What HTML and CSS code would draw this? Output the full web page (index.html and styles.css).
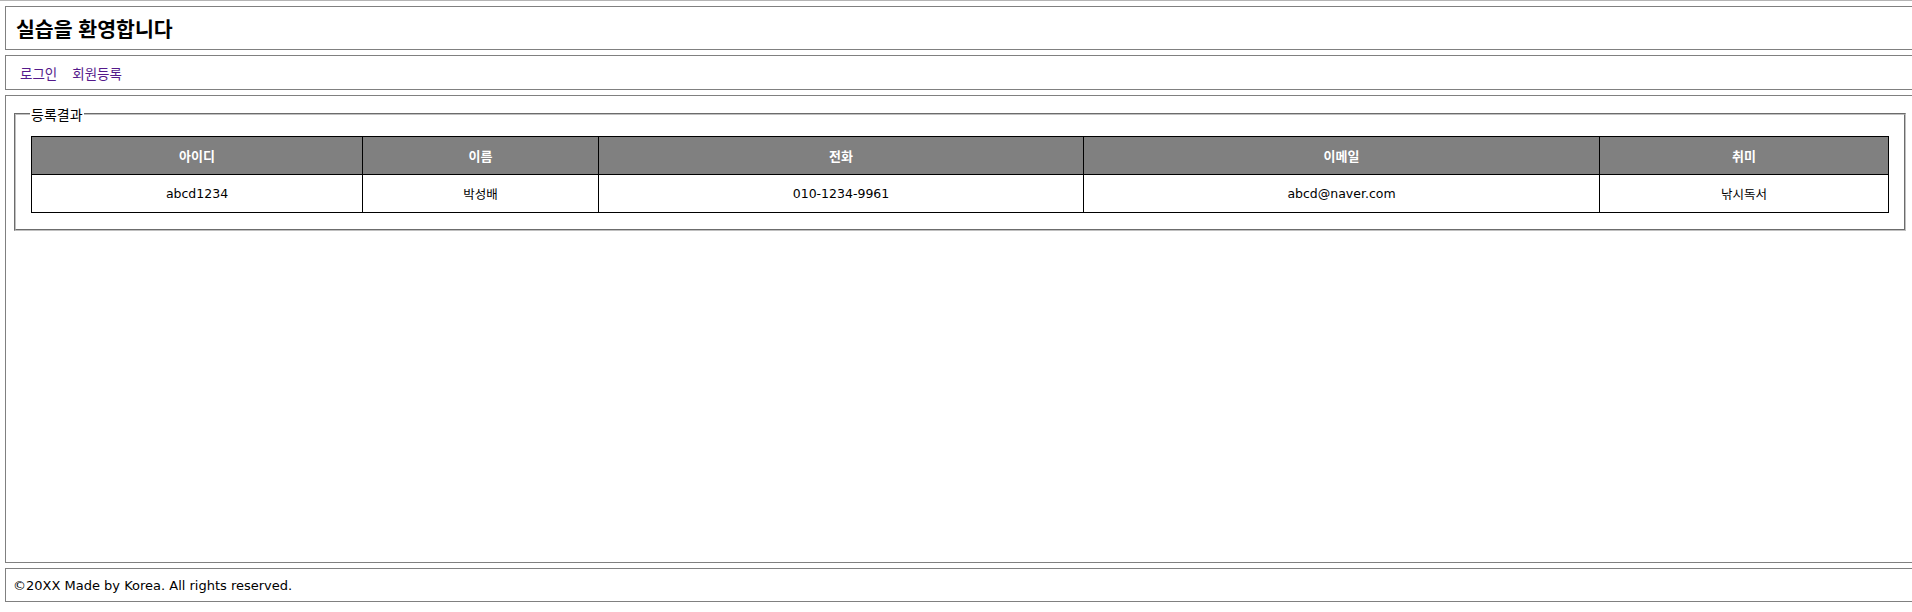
FILE: index.html
```html
<!DOCTYPE html>
<html lang="ko">
<head>
<meta charset="utf-8">
<title>실습</title>
<link rel="stylesheet" href="styles.css">
</head>
<body>
<header class="box header">
  <h3 class="title">실습을 환영합니다</h3>
</header>
<nav class="box nav">
  <a href="#login" class="link">로그인</a>
  <a href="#join" class="link">회원등록</a>
</nav>
<main class="box main">
  <fieldset class="result">
    <legend class="legend">등록결과</legend>
    <table class="grid">
      <colgroup>
        <col class="c1"><col class="c2"><col class="c3"><col class="c4"><col class="c5">
      </colgroup>
      <thead>
        <tr><th>아이디</th><th>이름</th><th>전화</th><th>이메일</th><th>취미</th></tr>
      </thead>
      <tbody>
        <tr><td>abcd1234</td><td>박성배</td><td>010-1234-9961</td><td>abcd@naver.com</td><td>낚시독서</td></tr>
      </tbody>
    </table>
  </fieldset>
</main>
<footer class="box footer">©20XX Made by Korea. All rights reserved.</footer>
</body>
</html>
```
FILE: styles.css
```css
html, body {
  margin: 0;
}
body {
  border-top: 1px solid #b4b4b4;
  padding: 5px 0 0 5px;
  font-family: "DejaVu Sans", Verdana, "Noto Sans CJK KR", sans-serif;
  font-size: 13px;
  color: #000;
  background: #fff;
}
.box {
  border: 1px solid #808080;
  width: 100%;
  margin-bottom: 5px;
}
.header {
  height: 42px;
  padding: 0 10px;
  display: flex;
  align-items: center;
}
.title {
  margin: 0;
  font-family: "Noto Sans CJK KR", sans-serif;
  font-size: 20.5px;
  font-weight: bold;
}
.nav {
  height: 33px;
  padding: 0 14px;
  display: flex;
  align-items: center;
  gap: 15px;
}
.link {
  color: #551a8b;
  text-decoration: none;
  font-family: "Noto Sans CJK KR", sans-serif;
  font-size: 13.5px;
}
.main {
  width: calc(100% - 12px);
  height: 458px;
  padding: 8px 6px 0 6px;
  box-sizing: content-box;
}
.result {
  margin: 0 2px;
  border: 2px groove #c0c0c0;
  padding: 12px 15px 16px 15px;
}
.legend {
  padding: 0 1px;
  margin-left: -1px;
  font-family: "Noto Sans CJK KR", sans-serif;
  font-size: 14px;
}
.grid {
  width: 100%;
  table-layout: fixed;
  border-collapse: collapse;
  border: 1px solid #000;
}
.c1 { width: 331px; }
.c2 { width: 236px; }
.c3 { width: 485px; }
.c4 { width: 516px; }
.c5 { width: 289px; }
.grid th, .grid td {
  border: 1px solid #000;
  height: 37px;
  padding: 0;
  text-align: center;
  font-size: 13px;
}
.grid td {
  font-size: 12.5px;
}
.grid th {
  background: #808080;
  color: #fff;
  font-weight: bold;
  font-family: "Noto Sans CJK KR", sans-serif;
}
.footer {
  height: 32px;
  padding: 0 7px;
  display: flex;
  align-items: center;
}
```
